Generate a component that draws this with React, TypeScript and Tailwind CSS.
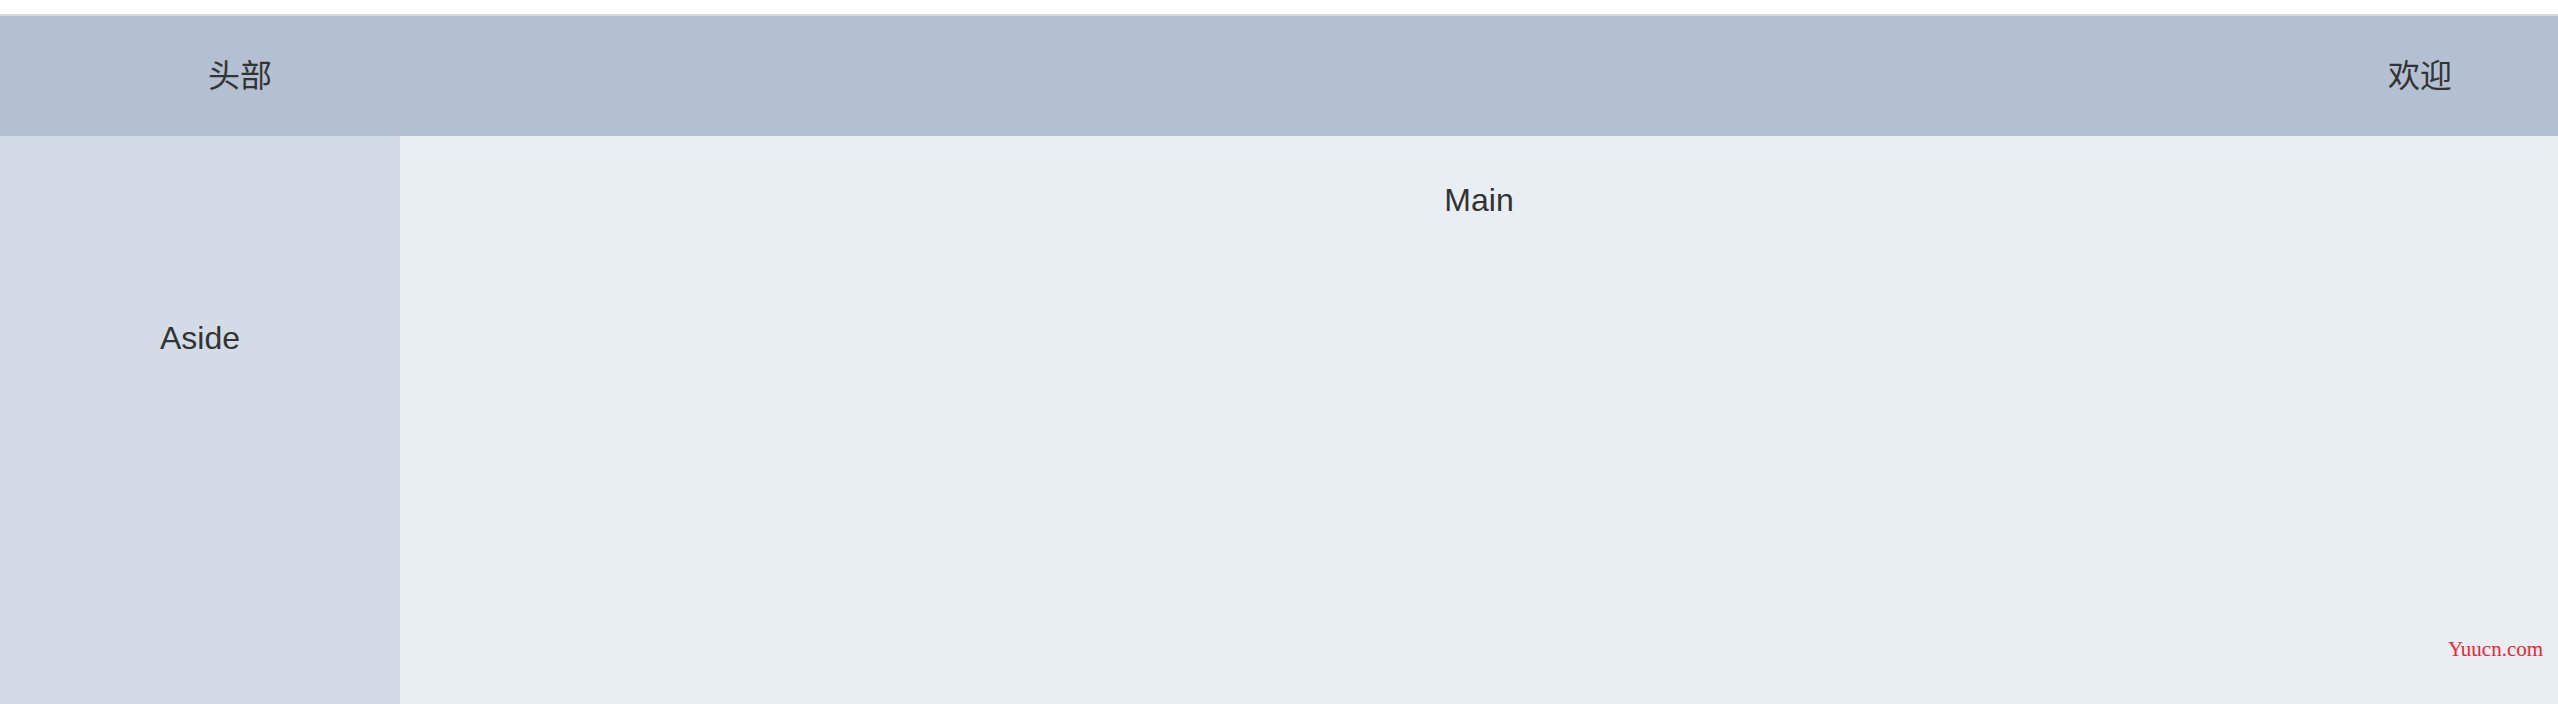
import React from "react";

export default function App() {
  const font = { fontFamily: '"Liberation Sans", "Noto Sans CJK SC", sans-serif' };
  return (
    <div className="relative w-full min-h-[704px] bg-white text-[#333]" style={font}>
      <div className="h-[14px] bg-white" />
      <div className="h-[2px] bg-[#d9d9d9]" />
      <header className="flex h-[120px] items-center justify-between bg-[#B3C0D1] px-[40px] text-[32px] leading-[122px]">
        <div className="w-[400px] text-center">头部</div>
        <div className="w-[196px] text-center">欢迎</div>
      </header>
      <div className="flex h-[568px]">
        <aside className="w-[400px] shrink-0 bg-[#D3DCE6] text-center text-[32px] leading-[404px]">Aside</aside>
        <main className="flex-1 bg-[#E9EEF3] p-[40px] text-center text-[32px] leading-[48px]">Main</main>
      </div>
      <div
        className="absolute left-[2448px] top-[637px] text-[21px] leading-[24px] text-[#f5222d]"
        style={{ fontFamily: '"Liberation Serif", serif' }}
      >
        Yuucn.com
      </div>
    </div>
  );
}
